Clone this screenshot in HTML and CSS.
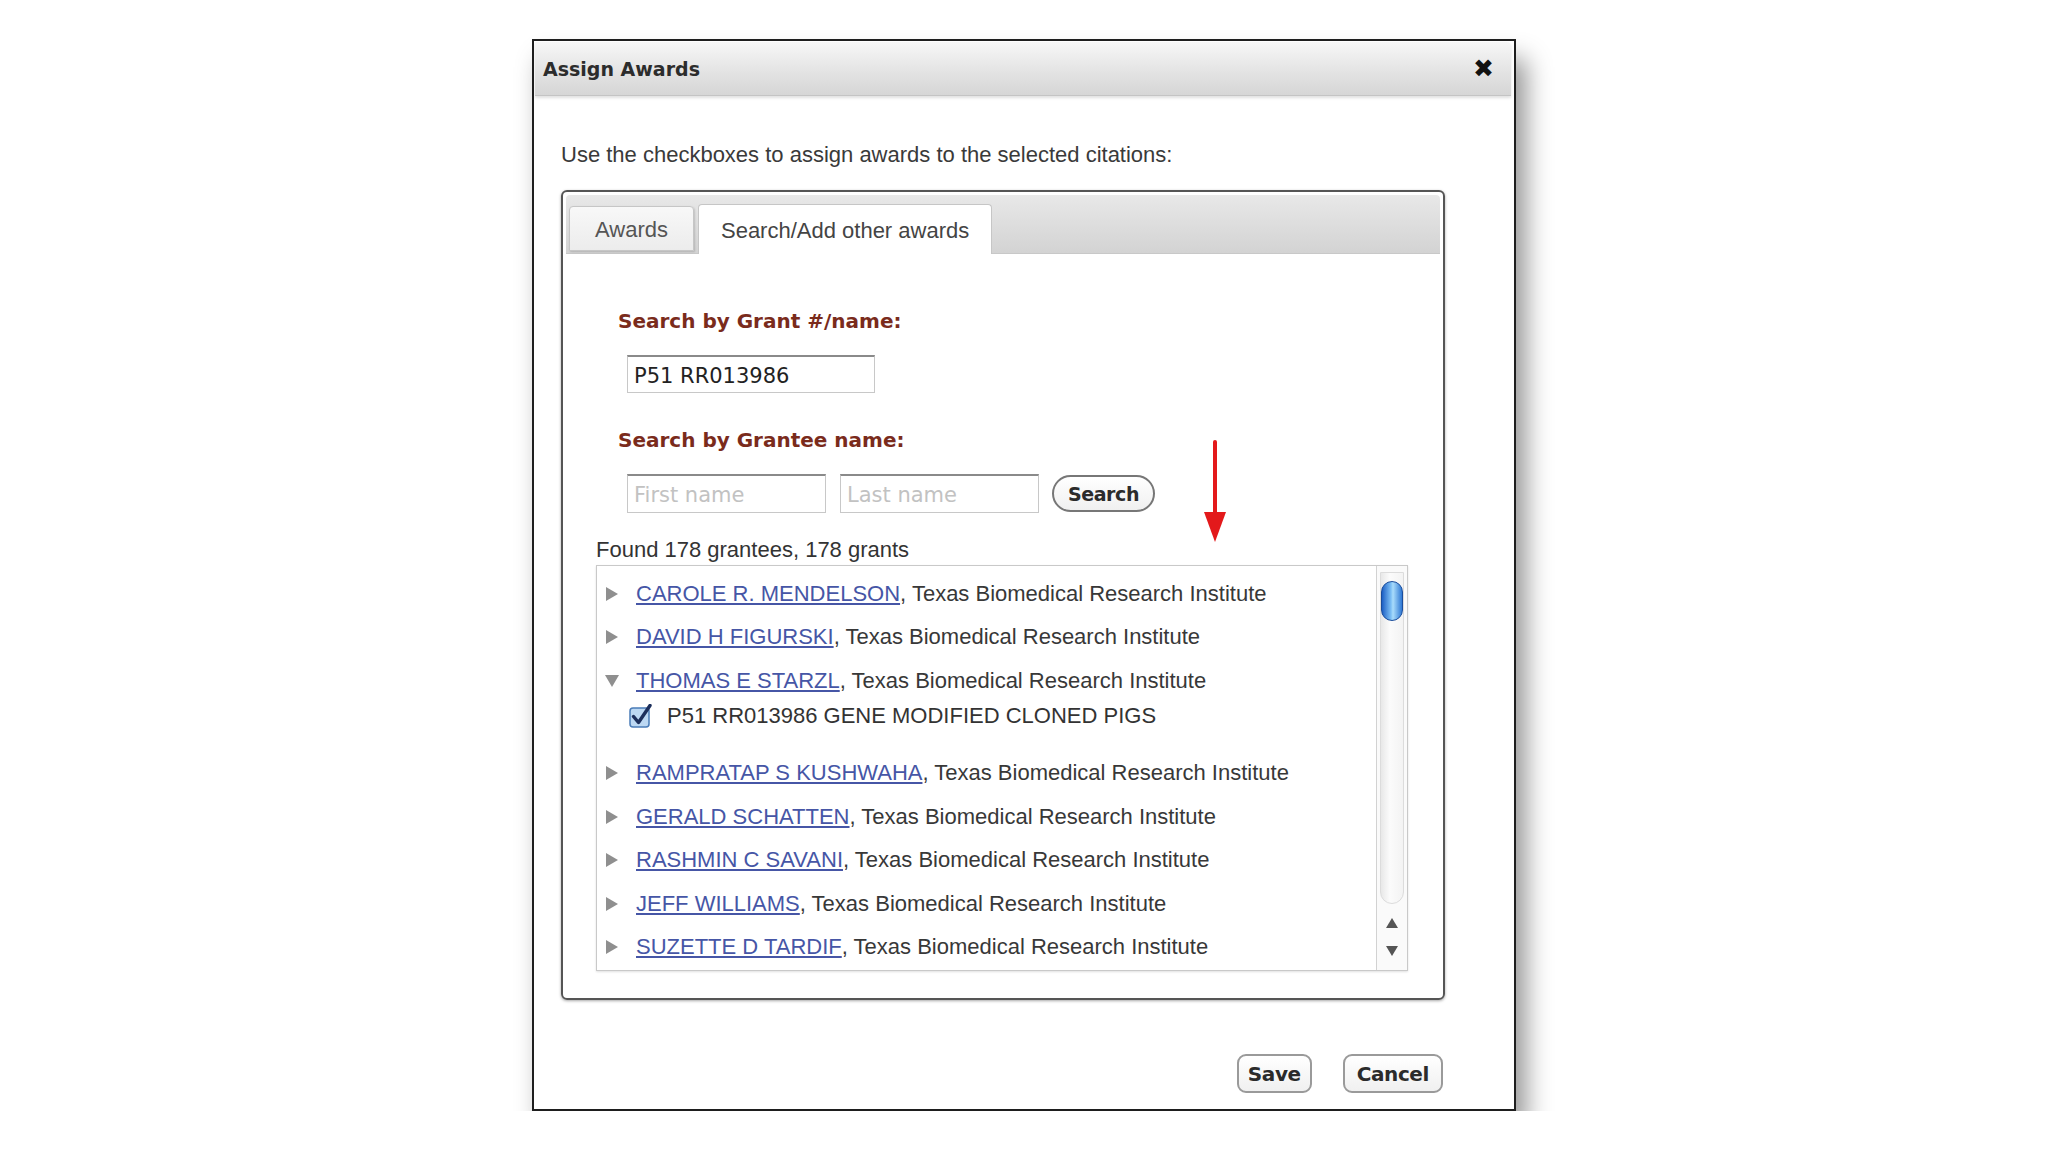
FILE: index.html
```html
<!DOCTYPE html>
<html lang="en">
<head>
    <meta charset="UTF-8">
    <meta name="viewport" content="width=device-width, initial-scale=1.0">
    <title>Assign Awards</title>
    <link rel="stylesheet" href="styles.css">
</head>
<body>
  <div class="dialog">
    <div class="titlebar">
      <span class="title">Assign Awards</span>
      <span class="close">&#10006;</span>
    </div>
    <div class="dialog-body">
      <p class="intro">Use the checkboxes to assign awards to the selected citations:</p>

      <div class="panel">
        <div class="tabs">
          <div class="tab">Awards</div>
          <div class="tab active">Search/Add other awards</div>
        </div>

        <div class="panel-body">
          <h3 class="label">Search by Grant #/name:</h3>
          <input class="field grant" type="text" value="P51 RR013986">

          <h3 class="label">Search by Grantee name:</h3>
          <div class="name-row">
            <input class="field name" type="text" placeholder="First name">
            <input class="field name" type="text" placeholder="Last name">
            <button class="btn search" type="button">Search</button>
          </div>

          <div class="found">Found 178 grantees, 178 grants</div>

          <div class="results">
            <ul class="list">
              <li class="row"><span class="tri"></span><a href="#">CAROLE R. MENDELSON</a>, Texas Biomedical Research Institute</li>
              <li class="row"><span class="tri"></span><a href="#">DAVID H FIGURSKI</a>, Texas Biomedical Research Institute</li>
              <li class="row open"><span class="tri"></span><a href="#">THOMAS E STARZL</a>, Texas Biomedical Research Institute</li>
              <li class="grant-row">
                <svg class="check" width="24" height="24" viewBox="0 0 24 24">
                  <rect x="1" y="4" width="19" height="19" rx="3" fill="#bcd8f3" stroke="#4a7cb8" stroke-width="1.5"/>
                  <path d="M4.5 12.5 L9.5 18.5 L21 1.5" fill="none" stroke="#1c2f5c" stroke-width="3.4" stroke-linecap="round" stroke-linejoin="round"/>
                </svg>
                P51 RR013986 GENE MODIFIED CLONED PIGS
              </li>
              <li class="row"><span class="tri"></span><a href="#">RAMPRATAP S KUSHWAHA</a>, Texas Biomedical Research Institute</li>
              <li class="row"><span class="tri"></span><a href="#">GERALD SCHATTEN</a>, Texas Biomedical Research Institute</li>
              <li class="row"><span class="tri"></span><a href="#">RASHMIN C SAVANI</a>, Texas Biomedical Research Institute</li>
              <li class="row"><span class="tri"></span><a href="#">JEFF WILLIAMS</a>, Texas Biomedical Research Institute</li>
              <li class="row"><span class="tri"></span><a href="#">SUZETTE D TARDIF</a>, Texas Biomedical Research Institute</li>
            </ul>
            <div class="scrollbar">
              <div class="track"><div class="thumb"></div></div>
              <div class="arrows">
                <span class="up"></span>
                <span class="down"></span>
              </div>
            </div>
          </div>
        </div>

        <svg class="pointer" width="26" height="104" viewBox="0 0 26 104">
          <line x1="13" y1="2" x2="13" y2="78" stroke="#e3191b" stroke-width="4" stroke-linecap="round"/>
          <path d="M2 72 L24 72 L13 102 Z" fill="#e3191b"/>
        </svg>
      </div>

      <div class="actions">
        <button class="btn save" type="button">Save</button>
        <button class="btn" type="button">Cancel</button>
      </div>
    </div>
  </div>
</body>
</html>
```

FILE: styles.css
```css
*{
  margin: 0;
  padding: 0;
  box-sizing: border-box;
}
body{
  background: #ffffff;
  display: flex;
  justify-content: center;
  padding-top: 39px;
  font-family: "Liberation Sans", Arial, sans-serif;
  color: #333;
}

.dialog{
  width: 984px;
  height: 1072px;
  background: #fff;
  border: 2px solid #1e1e1e;
  box-shadow: 10px 20px 24px rgba(0,0,0,0.42);
  padding: 1px 3px 0 1px;
}
.titlebar{
  height: 54px;
  display: flex;
  align-items: center;
  justify-content: space-between;
  padding: 0 17px 0 8px;
  background: linear-gradient(#f7f7f7, #e2e2e2 60%, #d6d6d6);
  border-bottom: 1px solid #c4c4c4;
  border-radius: 0 4px 0 0;
  box-shadow: 0 2px 3px rgba(0,0,0,0.12);
}
.title{
  font-family: "DejaVu Sans", sans-serif;
  font-weight: bold;
  font-size: 19px;
  color: #2c2c2c;
}
.close{
  font-family: "DejaVu Sans", sans-serif;
  font-size: 25px;
  color: #111;
}

.dialog-body{
  padding: 47px 0 0 26px;
}
.intro{
  font-size: 22px;
  line-height: 24px;
  color: #3a3a3a;
}

.panel{
  position: relative;
  margin-top: 23px;
  width: 884px;
  height: 810px;
  border: 2px solid #555;
  border-radius: 6px;
  box-shadow: 0 1px 3px rgba(0,0,0,0.35);
  padding: 3px;
}
.tabs{
  height: 59px;
  display: flex;
  align-items: flex-end;
  gap: 4px;
  padding-left: 3px;
  background: linear-gradient(#e8e8e8, #d3d3d3);
  border-radius: 4px 4px 0 0;
  border-bottom: 1px solid #c8c8c8;
}
.tab{
  height: 45px;
  margin-bottom: 2px;
  padding: 2px 25px 0;
  display: flex;
  align-items: center;
  font-size: 22px;
  color: #555;
  background: linear-gradient(#f8f8f8, #ececec);
  border: 1px solid #c6c6c6;
  border-radius: 4px 4px 0 0;
  box-shadow: 1px 1px 2px rgba(0,0,0,0.15);
}
.tab.active{
  height: 50px;
  margin-bottom: -1px;
  padding: 2px 22px 0;
  color: #444;
  background: #fff;
  border-bottom: none;
  box-shadow: none;
}

.panel-body{
  padding: 54px 32px 0 30px;
}
.label{
  margin-left: 22px;
  font-family: "DejaVu Sans", sans-serif;
  font-size: 20px;
  line-height: 26px;
  font-weight: bold;
  color: #7a2b1c;
}
.field{
  display: block;
  height: 38px;
  margin-left: 31px;
  padding: 2px 6px 0;
  font-family: "DejaVu Sans", sans-serif;
  font-size: 21px;
  color: #222;
  background: #fff;
  border: 1px solid #c8c8c8;
  border-top: 2px solid #8a8a8a;
  outline: none;
}
.field.grant{
  width: 248px;
  margin-top: 21px;
  margin-bottom: 34px;
}
.field::placeholder{
  color: #c2c2c2;
}
.name-row{
  margin-top: 21px;
  display: flex;
  align-items: center;
}
.field.name{
  width: 199px;
  height: 39px;
  margin-right: -17px;
}
.field.name + .field.name{
  margin-left: 31px;
  margin-right: 13px;
}
.btn{
  font-family: "DejaVu Sans", sans-serif;
  font-weight: bold;
  font-size: 20px;
  color: #2b2b2b;
  background: linear-gradient(#ffffff, #f0f0f0);
  border: 2px solid #9a9a9a;
  border-radius: 9px;
  cursor: pointer;
  letter-spacing: -0.4px;
}
.btn.search{
  width: 103px;
  height: 37px;
  border-radius: 19px;
  border-color: #777;
  font-size: 19px;
}

.found{
  margin-top: 25px;
  font-size: 22px;
  line-height: 24px;
  color: #333;
}
.results{
  margin-top: 3px;
  height: 406px;
  display: flex;
  border: 1px solid #c9c9c9;
  box-shadow: 0 1px 2px rgba(0,0,0,0.12);
}
.list{
  flex: 1;
  list-style: none;
  padding-top: 6px;
  overflow: hidden;
}
.row{
  height: 43.5px;
  display: flex;
  align-items: center;
  padding-left: 9px;
  font-size: 22px;
  white-space: pre;
  color: #383838;
}
.row a{
  color: #4656a6;
  text-decoration: underline;
}
.tri{
  width: 0;
  height: 0;
  margin-right: 18px;
  border-top: 7px solid transparent;
  border-bottom: 7px solid transparent;
  border-left: 12px solid #8f8f8f;
}
.row.open .tri{
  margin-left: -1px;
  margin-right: 17px;
  border-left: 7px solid transparent;
  border-right: 7px solid transparent;
  border-top: 12px solid #8f8f8f;
  border-bottom: none;
}
.grant-row{
  height: 26px;
  margin-bottom: 23px;
  display: flex;
  align-items: center;
  gap: 14px;
  padding-left: 32px;
  font-size: 22px;
  color: #333;
}
.check{
  flex: none;
}

.scrollbar{
  width: 31px;
  display: flex;
  flex-direction: column;
  border-left: 1px solid #d2d2d2;
  background: #fafafa;
}
.track{
  flex: 1;
  margin: 6px 3px 0;
  padding-top: 8px;
  display: flex;
  justify-content: center;
  background: linear-gradient(90deg, #e8e8e8, #fbfbfb 40%, #f3f3f3);
  border: 1px solid #dcdcdc;
  border-radius: 0 0 12px 12px;
}
.thumb{
  width: 22px;
  height: 40px;
  border-radius: 11px;
  background: linear-gradient(90deg, #1d5fc4, #7ec0f5 45%, #a9dcfb 55%, #2f78d4);
  border: 1px solid #1a4d9c;
}
.arrows{
  height: 66px;
  display: flex;
  flex-direction: column;
  align-items: center;
  justify-content: center;
  gap: 18px;
}
.up, .down{
  width: 0;
  height: 0;
  border-left: 6px solid transparent;
  border-right: 6px solid transparent;
}
.up{
  border-bottom: 10px solid #555;
}
.down{
  border-top: 10px solid #555;
}

.pointer{
  position: absolute;
  left: 639px;
  top: 248px;
}

.actions{
  width: 884px;
  margin-top: 54px;
  display: flex;
  justify-content: flex-end;
  gap: 31px;
  padding-right: 2px;
}
.actions .btn{
  height: 39px;
  padding: 0 12px;
}
.actions .btn.save{
  padding: 0 9px;
}
```
